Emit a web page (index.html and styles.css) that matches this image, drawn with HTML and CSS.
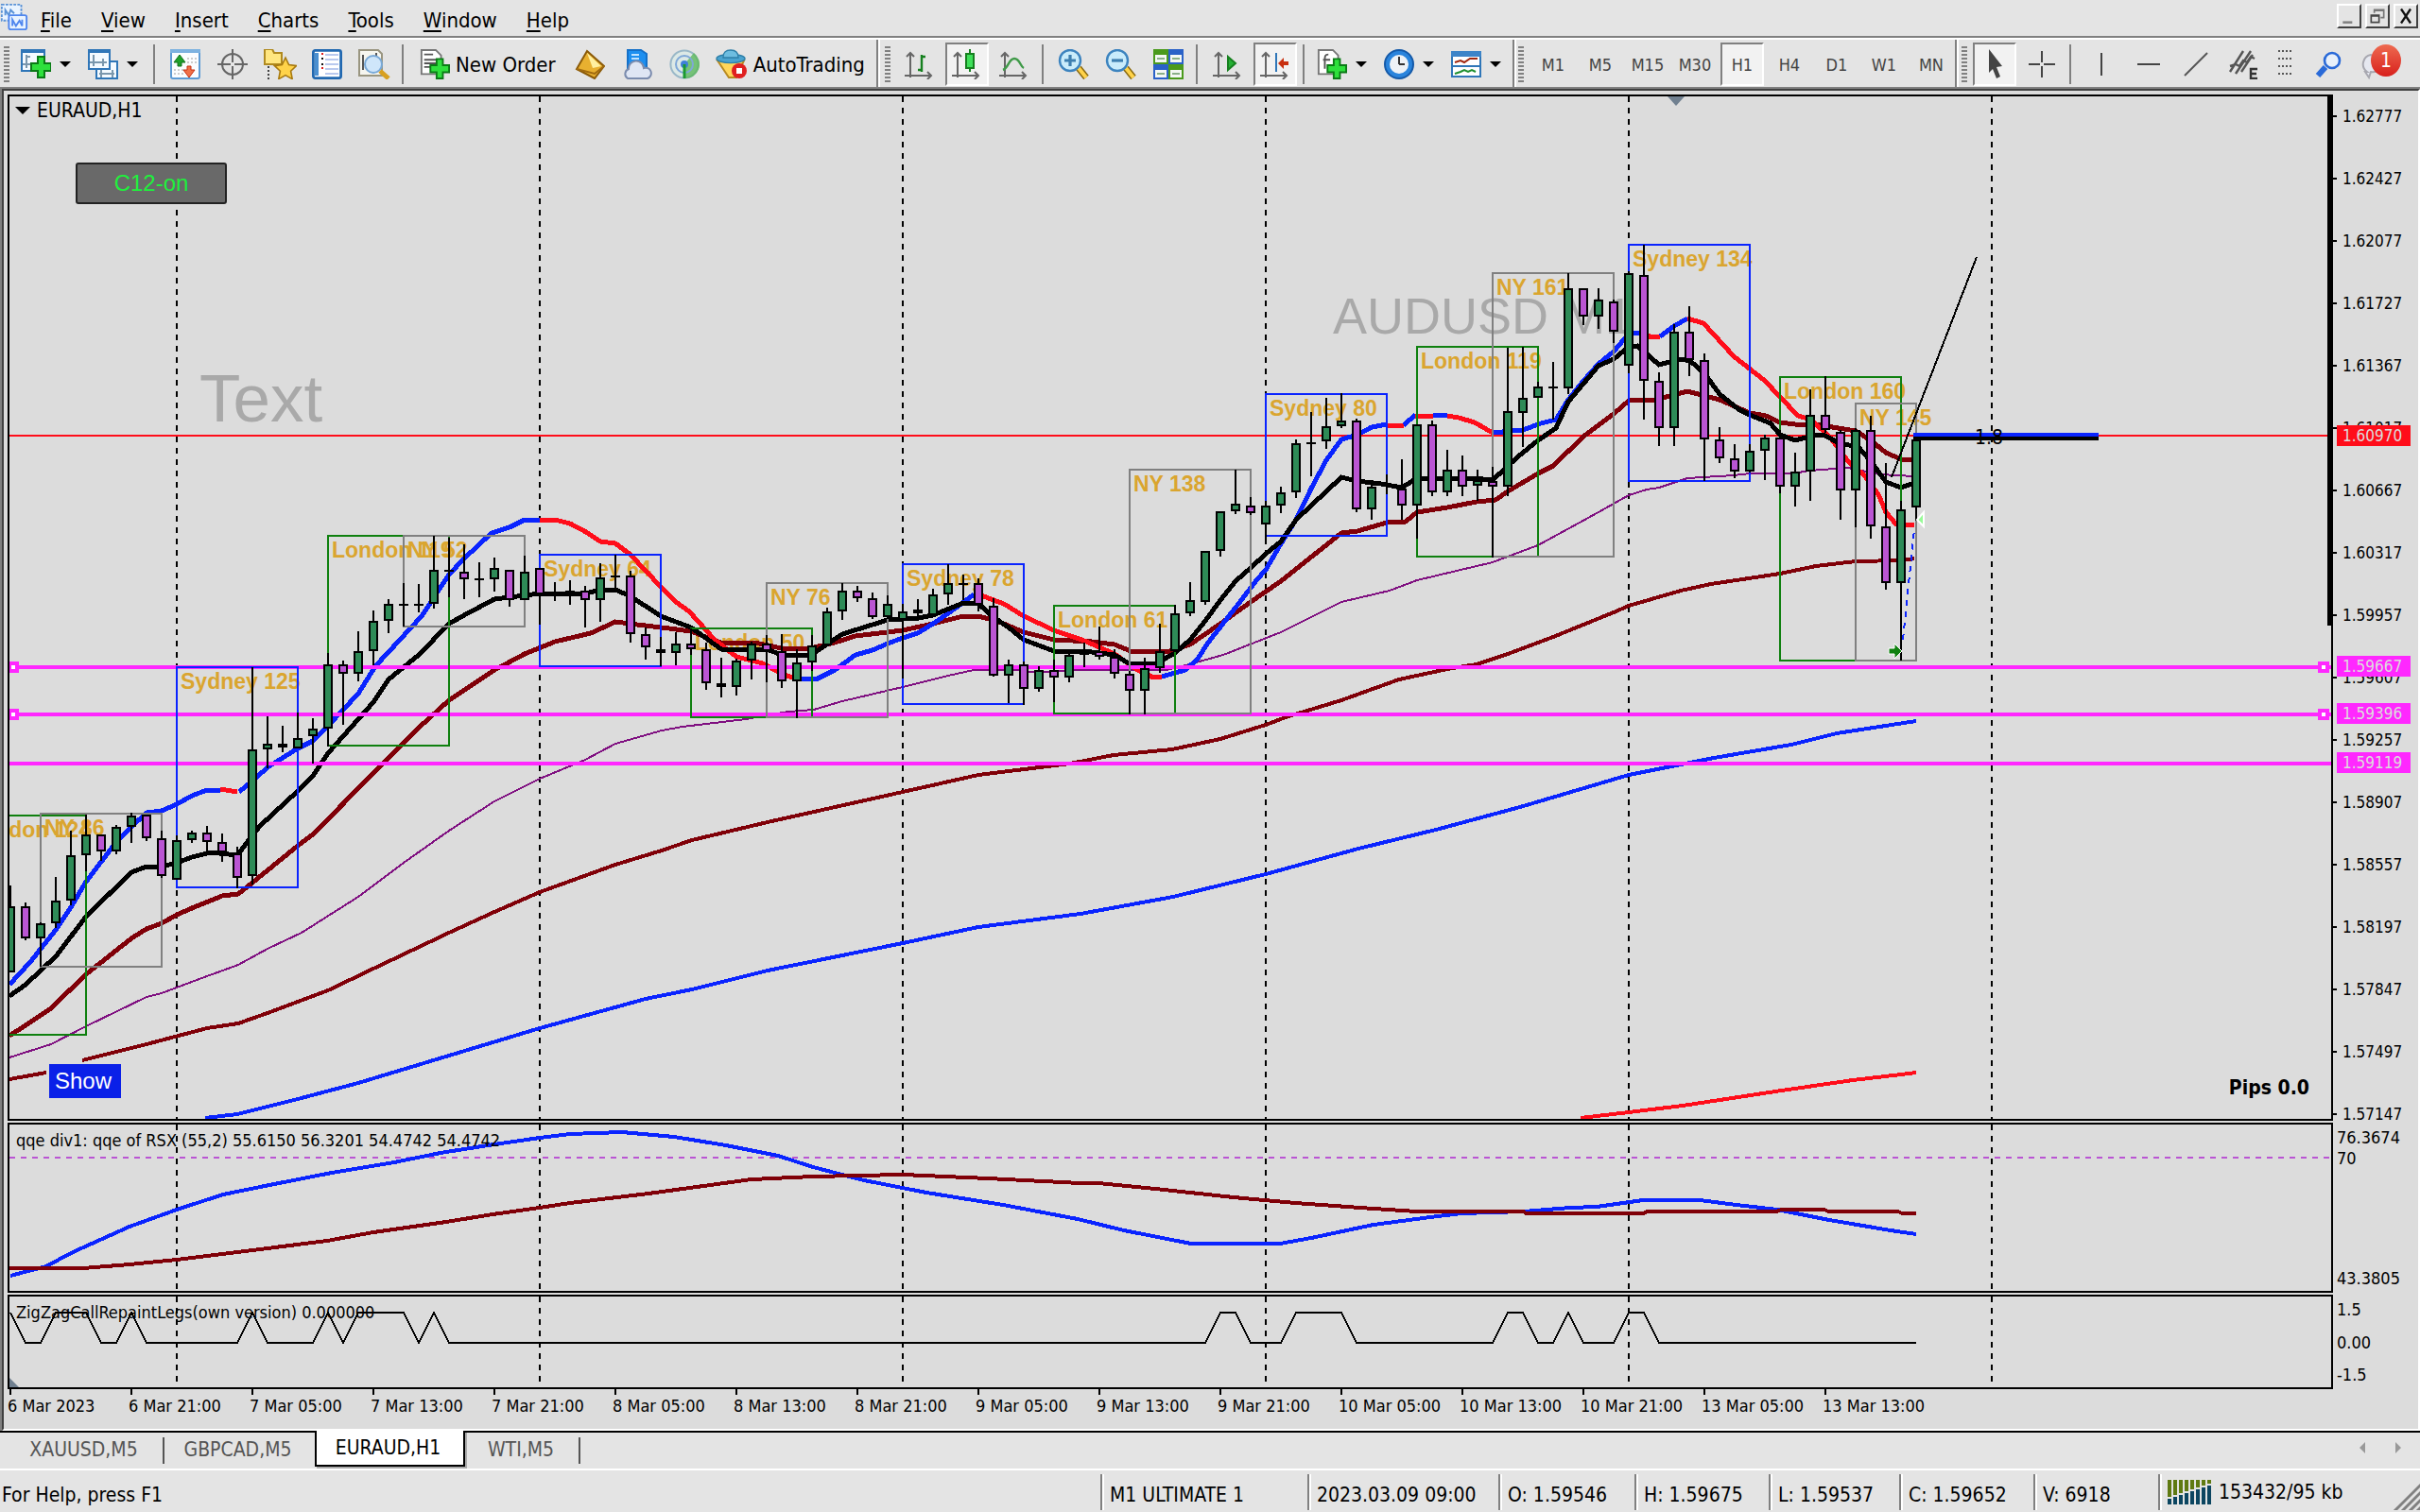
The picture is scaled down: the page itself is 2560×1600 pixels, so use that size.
FILE: index.html
```html
<!DOCTYPE html>
<html lang="en">
<head>
  <meta charset="UTF-8">
  <meta name="viewport" content="width=device-width, initial-scale=1.0">
  <title>EURAUD,H1</title>
  <link rel="stylesheet" href="styles.css">
</head>
<body>
  <!-- menu bar -->
  <header class="menubar">
    <svg class="app-icon" viewBox="0 0 16 16">
      <rect x="1" y="1" width="11" height="9" fill="#eaf4ff" stroke="#5b93d6" stroke-dasharray="1.5 .7"/>
      <path d="M3 7V4l2 3 1-3 2 2" fill="none" stroke="#5b93d6"/>
      <rect x="5" y="7" width="10" height="8" rx="1" fill="#eaf4ff" stroke="#4f86ee"/>
      <path d="M7 13V9.500l2 3.500 2-3 1.500 3V9.500" fill="none" stroke="#4f86ee"/>
    </svg>
    <nav class="menus">
      <button><u>F</u>ile</button>
      <button><u>V</u>iew</button>
      <button><u>I</u>nsert</button>
      <button><u>C</u>harts</button>
      <button><u>T</u>ools</button>
      <button><u>W</u>indow</button>
      <button><u>H</u>elp</button>
    </nav>
    <div class="window-buttons">
      <button aria-label="Minimize"><svg viewBox="0 0 12 12"><path d="M2 10h6" stroke="#808080" stroke-width="1.5"/></svg></button>
      <button aria-label="Restore"><svg viewBox="0 0 12 12"><path d="M4 4V2h6v5H8M4 2.500h6" fill="none" stroke="#777"/><path d="M2 5.500h5V10H2zM2 6h5" fill="none" stroke="#444"/></svg></button>
      <button aria-label="Close"><svg viewBox="0 0 12 12"><path d="M3 1.500l6 9M9 1.500l-6 9" stroke="#111" stroke-width="1.400"/></svg></button>
    </div>
  </header>

  <!-- toolbars -->
  <div class="toolbars">
    <div class="toolbar">
      <span class="grip"></span>
      <button class="tool drop" aria-label="New chart">
        <svg viewBox="0 0 16 16"><rect x=".5" y=".5" width="12" height="11" fill="#f4faff" stroke="#2f76b8"/><path d="M0 1h13" stroke="#2f76b8" stroke-width="2"/><path d="M3 3v7M1 8h9M3 4h2" stroke="#7a97ad" fill="none"/><path d="M9 4h3.500v3.500H16v4h-3.500V15H9v-3.500H5.500v-4H9z" fill="#2ee03c" stroke="#0b7a16"/></svg>
      </button>
      <button class="tool drop" aria-label="Profiles">
        <svg viewBox="0 0 16 16"><rect x="4.500" y="6.500" width="11" height="9" fill="#f4faff" stroke="#2f76b8"/><rect x=".5" y=".5" width="11" height="10" fill="#f4faff" stroke="#2f76b8"/><path d="M0 1h12" stroke="#2f76b8" stroke-width="2"/><path d="M3 3v6M1 7h9M8 5v4M6 13h8M7 11v4M13 11v4" stroke="#7a97ad"/></svg>
      </button>
      <span class="sep"></span>
      <button class="tool" aria-label="Market Watch">
        <svg viewBox="0 0 16 16"><rect x=".5" y=".5" width="15" height="15" rx="1" fill="#fbfdff" stroke="#5d9bd5"/><path d="M0 1h16" stroke="#7db2e0" stroke-width="2"/><path d="M9 5h5M9 7h5M2 11h5M2 13h5" stroke="#ccc" stroke-dasharray="1 1"/><path d="M5 3l3 4H6v2H4V7H2z" fill="#1fa02a" stroke="#10701a" stroke-width=".5"/><path d="M9 9h2v2h2l-3 4-3-4h2z" fill="#f07048" stroke="#c83010" stroke-width=".5"/></svg>
      </button>
      <button class="tool" aria-label="Data Window">
        <svg viewBox="0 0 16 16"><circle cx="8" cy="8" r="5.500" fill="none" stroke="#666"/><path d="M8 0v7M8 9v7M0 8h7M9 8h7" stroke="#666"/></svg>
      </button>
      <button class="tool" aria-label="Navigator">
        <svg viewBox="0 0 18 16"><path d="M1 0h4l1 2h4v6H1z" fill="#ffe680" stroke="#b08a20"/><path d="M3 9v7" stroke="#444" stroke-dasharray="1 1"/><path d="M12 4.500l1.800 3.800 4 .5-3 2.800.8 4.200-3.600-2-3.600 2 .8-4.200-3-2.800 4-.5z" fill="#ffd34a" stroke="#a87a10" stroke-width=".8"/></svg>
      </button>
      <button class="tool" aria-label="Terminal">
        <svg viewBox="0 0 16 16"><rect x=".7" y=".7" width="14.600" height="14.600" rx="1" fill="#fff" stroke="#2168b0" stroke-width="1.400"/><path d="M2.500 2v12" stroke="#4a8fd0" stroke-width="2"/><path d="M7 3h7M7 5.500h7M7 8h7M7 10.500h7M7 13h7" stroke="#b9c9ee"/><path d="M5 2.500h1M5 10h1" stroke="#e02020"/><path d="M5 5h1M5 8h1" stroke="#111"/></svg>
      </button>
      <button class="tool" aria-label="Strategy Tester">
        <svg viewBox="0 0 18 16"><path d="M1 .5h10l2 2V14H1z" fill="#f6f6f0" stroke="#999580"/><path d="M3 3v8M10 2v3" stroke="#555"/><circle cx="8.500" cy="8" r="4.500" fill="#cfe6fa" stroke="#79a9d8"/><path d="M12 11.500l4.500 4" stroke="#d8a020" stroke-width="2.500"/></svg>
      </button>
      <span class="sep"></span>
      <button class="tool labelled new-order">
        <svg viewBox="0 0 16 17"><path d="M.5.5h8l3 3V14H.5z" fill="#fff" stroke="#777"/><path d="M2 3h5M2 6h7M2 8h7M2 10h5" stroke="#555"/><path d="M9 5.500h3.500V9H16v4h-3.500v3.500H9V13H5.500V9H9z" fill="#2ee03c" stroke="#0b7a16"/></svg>
        New Order
      </button>
      <button class="tool" aria-label="MetaEditor">
        <svg viewBox="0 0 16 16"><path d="M6.500 1l9 8-5 6.500-9.500-5z" fill="#e8b030" stroke="#8a5a08"/><path d="M6.500 2l7.500 7-4.500 1z" fill="#fff0a0"/><path d="M1 10.500l9.500 2.500 5-4" fill="none" stroke="#a06a10"/></svg>
      </button>
      <button class="tool" aria-label="VPS">
        <svg viewBox="0 0 16 16"><path d="M3 .5h7l3 2v8H3z" fill="#1d8ff0" stroke="#1570c8"/><path d="M5 3h4M5 5h4M5 7h4" stroke="#bfe2ff"/><path d="M3 15.500a2.800 2.800 0 01.5-5 4 4 0 018-.5 2.800 2.800 0 012 5.500z" fill="#dfe6f4" stroke="#7b8cae"/></svg>
      </button>
      <button class="tool" aria-label="Signals">
        <svg viewBox="0 0 16 16"><circle cx="8" cy="8" r="7.300" fill="#dce9e6" stroke="#9ab8c8"/><path d="M8 8V15.500A7.500 7.500 0 0013 2z" fill="#5cb85c" opacity=".8"/><circle cx="8" cy="8" r="4.500" fill="none" stroke="#7fa8d8"/><circle cx="8" cy="8" r="2" fill="#3f80d8"/><path d="M8 8v7.500" stroke="#1a9a30" stroke-width="1.500"/></svg>
      </button>
      <button class="tool labelled auto-trading">
        <svg viewBox="0 0 17 16"><path d="M1 6h14l-4 9H7z" fill="#ffd75a" stroke="#b88a20"/><ellipse cx="8" cy="5" rx="7.500" ry="2.300" fill="#4aa3cf" stroke="#2d7fa8" stroke-width=".7"/><path d="M4 4.500C4 1 6 .5 8 .5s4 .5 4 4z" fill="#6dbde0" stroke="#2d7fa8" stroke-width=".7"/><circle cx="12.500" cy="11.500" r="4" fill="#e02020"/><path d="M11 10h3v3h-3z" fill="#fff"/></svg>
        AutoTrading
      </button>
    </div>

    <div class="toolbar charts">
      <span class="grip"></span>
      <button class="tool" aria-label="Bar Chart">
        <svg viewBox="0 0 16 16"><path d="M3 2v13M1 4l2-2 2 2M0 14h14M12 12l2 2-2 2" fill="none" stroke="#666"/><path d="M9 3v9M9 4h2M7 11h2" stroke="#16801f" stroke-width="1.200"/></svg>
      </button>
      <button class="tool pressed" aria-label="Candlesticks">
        <svg viewBox="0 0 16 16"><path d="M3 2v13M1 4l2-2 2 2M0 14h14M12 12l2 2-2 2" fill="none" stroke="#666"/><path d="M9.500 0v12" stroke="#16801f"/><rect x="7.500" y="2.500" width="4" height="7.500" fill="#3fe05a" stroke="#16801f"/></svg>
      </button>
      <button class="tool" aria-label="Line Chart">
        <svg viewBox="0 0 16 16"><path d="M3 2v13M1 4l2-2 2 2M0 14h14M12 12l2 2-2 2" fill="none" stroke="#666"/><path d="M2 11c3-1 3-6 6-6s3 4 5 5" fill="none" stroke="#3f9a48" stroke-width="1.200"/></svg>
      </button>
      <span class="sep"></span>
      <button class="tool" aria-label="Zoom In">
        <svg viewBox="0 0 17 16"><path d="M11 10l4 5" stroke="#8a6a10" stroke-width="3.500"/><path d="M11 10l4 5" stroke="#ffd34a" stroke-width="2"/><circle cx="6.500" cy="6" r="5.500" fill="#c9ecfb" stroke="#3d84bf" stroke-width="1.200"/><path d="M6.500 3v6M3.500 6h6" stroke="#3d7fb0" stroke-width="1.600"/></svg>
      </button>
      <button class="tool" aria-label="Zoom Out">
        <svg viewBox="0 0 17 16"><path d="M11 10l4 5" stroke="#8a6a10" stroke-width="3.500"/><path d="M11 10l4 5" stroke="#ffd34a" stroke-width="2"/><circle cx="6.500" cy="6" r="5.500" fill="#c9ecfb" stroke="#3d84bf" stroke-width="1.200"/><path d="M3.500 6h6" stroke="#3d7fb0" stroke-width="1.600"/></svg>
      </button>
      <button class="tool" aria-label="Tile Windows">
        <svg viewBox="0 0 16 16"><path d="M0 0h8v8H0z" fill="#4a9a1c"/><path d="M8 0h8v8H8z" fill="#2a62c8"/><path d="M0 8h8v8H0z" fill="#2a62c8"/><path d="M8 8h8v8H8z" fill="#4a9a1c"/><path d="M1 3h6v4H1zM9 3h6v4H9zM1 11h6v4H1zM9 11h6v4H9z" fill="#f4f8f4"/><path d="M2 5h4M10 5h4M2 13h4M10 13h4" stroke="#8ab088"/></svg>
      </button>
      <span class="sep"></span>
      <button class="tool" aria-label="Auto Scroll">
        <svg viewBox="0 0 16 16"><path d="M3 2v13M1 4l2-2 2 2M0 14h14M12 12l2 2-2 2" fill="none" stroke="#666"/><path d="M8 4l4 3.500L8 11z" fill="#25b034" stroke="#16801f"/></svg>
      </button>
      <button class="tool pressed" aria-label="Chart Shift">
        <svg viewBox="0 0 16 16"><path d="M3 2v13M1 4l2-2 2 2M0 14h14M12 12l2 2-2 2" fill="none" stroke="#666"/><path d="M8.500 2v10" stroke="#2f76b8"/><path d="M9.500 7.500l3-3v2H15v2h-2.500v2z" fill="#c83010"/></svg>
      </button>
      <span class="sep"></span>
      <button class="tool drop" aria-label="Indicators">
        <svg viewBox="0 0 16 17"><path d="M.5.5h8l3 3V14H.5z" fill="#fff" stroke="#777"/><path d="M6 3c-2 0-2 1-2 3v5M3 6h4" fill="none" stroke="#555"/><path d="M9 5.500h3.500V9H16v4h-3.500v3.500H9V13H5.500V9H9z" fill="#2ee03c" stroke="#0b7a16"/></svg>
      </button>
      <button class="tool drop" aria-label="Periods">
        <svg viewBox="0 0 16 16"><circle cx="8" cy="8" r="7.500" fill="#2a84dc" stroke="#1459a8"/><circle cx="8" cy="8" r="5" fill="#eef2f6"/><path d="M8 8V4M8 8h3" stroke="#333" fill="none"/></svg>
      </button>
      <button class="tool drop" aria-label="Templates">
        <svg viewBox="0 0 16 16"><rect x=".5" y="1.500" width="15" height="13" fill="#fff" stroke="#2f76b8"/><path d="M0 2.500h16" stroke="#3d84c8" stroke-width="3"/><path d="M0 9h16" stroke="#2f76b8"/><path d="M2 7l3-1 2 1 3-2h4" fill="none" stroke="#a02810"/><path d="M2 13l3-1 2-1 2 1 2-1 2 1" fill="none" stroke="#209030"/></svg>
      </button>
    </div>

    <div class="toolbar periods">
      <span class="grip"></span>
      <button class="tool period">M1</button>
      <button class="tool period">M5</button>
      <button class="tool period">M15</button>
      <button class="tool period">M30</button>
      <button class="tool period pressed">H1</button>
      <button class="tool period">H4</button>
      <button class="tool period">D1</button>
      <button class="tool period">W1</button>
      <button class="tool period">MN</button>
    </div>

    <div class="toolbar drawing">
      <span class="grip"></span>
      <button class="tool pressed" aria-label="Cursor">
        <svg viewBox="0 0 16 16"><path d="M5 0l7 9-3 .5 2 5-2 1-2-5-2 2z" fill="#444"/></svg>
      </button>
      <button class="tool" aria-label="Crosshair">
        <svg viewBox="0 0 16 16"><path d="M8 1v6M8 9v6M1 8h6M9 8h6" stroke="#444"/></svg>
      </button>
      <span class="sep"></span>
      <button class="tool" aria-label="Vertical Line">
        <svg viewBox="0 0 16 16"><path d="M8 2v12" stroke="#444"/></svg>
      </button>
      <button class="tool" aria-label="Horizontal Line">
        <svg viewBox="0 0 16 16"><path d="M2 8h12" stroke="#444"/></svg>
      </button>
      <button class="tool" aria-label="Trendline">
        <svg viewBox="0 0 16 16"><path d="M2 14L14 2" stroke="#555"/></svg>
      </button>
      <button class="tool" aria-label="Equidistant Channel">
        <svg viewBox="0 0 16 16"><path d="M1 12L8 1M4 13l8-12M7 12l6-9M1 9l3-1 2 1 2-3 2 1 2-3 2 1" fill="none" stroke="#555" stroke-width="1.200"/><path d="M15.500 10.500h-3.500v5h3.500M12 13h3" fill="none" stroke="#333" stroke-width="1.200"/></svg>
      </button>
      <button class="tool narrow" aria-label="More">
        <svg viewBox="0 0 16 16"><path d="M4 1h8M4 5h8M4 9h8M4 13h8" stroke="#555" stroke-dasharray="1 1"/></svg>
      </button>
      <button class="tool" aria-label="Search">
        <svg viewBox="0 0 16 16"><path d="M6.500 9.500l-4 4.500" stroke="#2a6ad8" stroke-width="3"/><circle cx="10" cy="6" r="4" fill="#e8f0fa" stroke="#2a6ad8" stroke-width="1.300"/></svg>
      </button>
      <button class="tool alerts" aria-label="Notifications">
        <svg viewBox="0 0 16 16"><path d="M7 3a5 5 0 00-2 9l-1 0 2 3 1-3a6 5 0 007-4z" fill="#e6e8f0" stroke="#a8a8b0"/></svg>
        <span class="badge">1</span>
      </button>
    </div>
  </div>

  <!-- chart window -->
  <main class="chart-window">
    <section class="pane pane-main">
      <svg id="mainChart" class="plot"></svg>
      <h1 class="symbol"><span class="down"></span>EURAUD,H1</h1>
      <button class="c12">C12-on</button>
      <button class="show">Show</button>
      <p class="pips">Pips 0.0</p>
      <span class="thick-bar"></span>
    </section>
    <div class="axis price-axis">
      <ol>
        <li>1.62777</li>
        <li>1.62427</li>
        <li>1.62077</li>
        <li>1.61727</li>
        <li>1.61367</li>
        <li>1.61017</li>
        <li>1.60667</li>
        <li>1.60317</li>
        <li>1.59957</li>
        <li>1.59607</li>
        <li>1.59257</li>
        <li>1.58907</li>
        <li>1.58557</li>
        <li>1.58197</li>
        <li>1.57847</li>
        <li>1.57497</li>
        <li>1.57147</li>
      </ol>
      <span class="tag bid">1.60970</span>
      <span class="tag level1">1.59667</span>
      <span class="tag level2">1.59396</span>
      <span class="tag level3">1.59119</span>
    </div>

    <section class="pane">
      <svg id="qqeChart" class="plot"></svg>
      <p class="pane-title">qqe div1: qqe of RSX (55,2) 55.6150 56.3201 54.4742 54.4742</p>
    </section>
    <div class="axis qqe-axis">
      <span>76.3674</span>
      <span>70</span>
      <span class="last">43.3805</span>
    </div>

    <section class="pane">
      <svg id="zigzagChart" class="plot"></svg>
      <p class="pane-title">ZigZagCallRepaintLegs(own version) 0.000000</p>
    </section>
    <div class="axis zigzag-axis">
      <span>1.5</span>
      <span>0.00</span>
      <span>-1.5</span>
    </div>

    <ol class="time-axis">
      <li>6 Mar 2023</li>
      <li>6 Mar 21:00</li>
      <li>7 Mar 05:00</li>
      <li>7 Mar 13:00</li>
      <li>7 Mar 21:00</li>
      <li>8 Mar 05:00</li>
      <li>8 Mar 13:00</li>
      <li>8 Mar 21:00</li>
      <li>9 Mar 05:00</li>
      <li>9 Mar 13:00</li>
      <li>9 Mar 21:00</li>
      <li>10 Mar 05:00</li>
      <li>10 Mar 13:00</li>
      <li>10 Mar 21:00</li>
      <li>13 Mar 05:00</li>
      <li>13 Mar 13:00</li>
    </ol>
  </main>

  <!-- chart tabs -->
  <nav class="tabs">
    <button class="tab">XAUUSD,M5</button>
    <button class="tab">GBPCAD,M5</button>
    <button class="tab active">EURAUD,H1</button>
    <button class="tab">WTI,M5</button>
    <div class="tab-scroll">
      <button aria-label="Scroll left"><svg viewBox="0 0 6 12"><path d="M6 0v12L0 6z" fill="#999"/></svg></button>
      <button aria-label="Scroll right"><svg viewBox="0 0 6 12"><path d="M0 0v12l6-6z" fill="#999"/></svg></button>
    </div>
  </nav>

  <!-- status bar -->
  <footer class="statusbar">
    <span class="help">For Help, press F1</span>
    <span class="profile">M1 ULTIMATE 1</span>
    <span class="date">2023.03.09 09:00</span>
    <span class="open">O: 1.59546</span>
    <span class="high">H: 1.59675</span>
    <span class="low">L: 1.59537</span>
    <span class="close">C: 1.59652</span>
    <span class="volume">V: 6918</span>
    <span class="traffic">
      <svg viewBox="0 0 46 26">
        <path d="M0 0h4v18H0zM6 0h4v16H6zM12 0h4v14h-4zM18 0h4v12h-4zM24 0h4v10h-4zM30 0h4v8h-4zM36 0h4v6h-4zM42 0h4v4h-4z" fill="#5f7a12"/>
        <path d="M0 20h4v6H0zM6 18h4v8H6zM12 16h4v10h-4zM18 14h4v12h-4zM24 12h4v14h-4zM30 10h4v16h-4zM36 8h4v18h-4zM42 6h4v20h-4z" fill="#0b4560"/>
      </svg>
      153432/95 kb
    </span>
    <svg class="resize" viewBox="0 0 30 30"><path d="M2 32L32 2M10 32L32 10M18 32L32 18M26 32l6-6" stroke="#808080" stroke-width="3"/></svg>
  </footer>

  <script src="chart.js"></script>
</body>
</html>
```
FILE: styles.css
```css
/* Global Styles */
* {
  box-sizing: border-box;
}

body {
  margin: 0;
  height: 100vh;
  display: flex;
  flex-direction: column;
  overflow: hidden;
  background-color: #e4e4e4;
  color: #000;
  font-family: "DejaVu Sans Condensed", "DejaVu Sans", sans-serif;
  font-size: 21px;
}

button {
  margin: 0;
  padding: 0;
  border: none;
  background: none;
  color: inherit;
  font: inherit;
}

ol, p, h1 {
  margin: 0;
  padding: 0;
  list-style: none;
  font-weight: normal;
}

/* menu bar */
.menubar {
  display: flex;
  align-items: center;
  height: 40px;
  padding: 2px 2px 0 0;
  border-bottom: 2px solid #808080;
  font-size: 22px;
}

.app-icon {
  width: 30px;
  height: 30px;
  margin-top: -4px;
}

.menus {
  display: flex;
  flex: 1;
}

.menus button {
  padding: 2px 18px 0 13px;
}

.menus u {
  text-underline-offset: 3px;
  text-decoration-thickness: 2px;
}

.window-buttons {
  display: flex;
  gap: 4px;
  margin-top: -6px;
}

.window-buttons button {
  width: 26px;
  height: 26px;
  border: 2px solid #fff;
  border-right-color: #404040;
  border-bottom-color: #404040;
  display: flex;
  align-items: center;
  justify-content: center;
}

.window-buttons svg {
  width: 20px;
  height: 20px;
}

/* toolbars */
.toolbars {
  display: flex;
  height: 52px;
  border-top: 2px solid #fff;
}

.toolbar {
  display: flex;
  align-items: center;
  flex: none;
  padding: 2px 6px 0 4px;
  border-right: 2px solid #808080;
  box-shadow: 2px 0 #fff;
}

.toolbar.charts {
  padding-right: 0;
  padding-left: 7px;
}

.toolbar.periods {
  padding-right: 0;
}

.toolbar.drawing {
  flex: 1;
  padding-left: 5px;
  border-right: none;
  box-shadow: none;
}

.grip {
  flex: none;
  width: 6px;
  height: 38px;
  margin-right: 6px;
  background: repeating-linear-gradient(#808080 0 2px, #e4e4e4 2px 4px);
}

.drawing .grip {
  margin-right: 4px;
}

.sep {
  flex: none;
  width: 2px;
  height: 42px;
  margin: 0 7px 0 4px;
  background-color: #808080;
}

.tool {
  display: flex;
  align-items: center;
  justify-content: center;
  flex: none;
  width: 50px;
  height: 46px;
}

.tool svg {
  flex: none;
  height: 32px;
  min-width: 32px;
}

.tool.drop {
  width: 71px;
  justify-content: flex-start;
  padding-left: 6px;
  gap: 9px;
}

.tool.drop::after {
  content: "";
  border: 6px solid transparent;
  border-top: 6px solid #000;
  border-bottom: none;
}

.tool.labelled {
  width: auto;
  gap: 6px;
  justify-content: flex-start;
  white-space: nowrap;
  font-size: 22px;
}

.new-order {
  padding: 0 11px 0 10px;
}

.auto-trading {
  padding: 0 6px 0 8px;
}

.tool.pressed {
  width: 46px;
  margin: 0 2px;
  border: 2px solid #fff;
  border-top-color: #808080;
  border-left-color: #808080;
  background: #f2f2f2;
}

.period {
  color: #444;
  font-size: 18px;
}

.tool.narrow {
  width: 40px;
}

.tool.alerts {
  position: relative;
  width: 60px;
  justify-content: flex-start;
  padding-left: 6px;
}

.badge {
  position: absolute;
  right: 8px;
  top: 2px;
  width: 32px;
  height: 34px;
  border-radius: 50%;
  background: linear-gradient(#ee6a50, #d8201c);
  color: #fff;
  line-height: 34px;
  text-align: center;
}

/* chart window */
.chart-window {
  flex: 1;
  display: grid;
  grid-template-columns: 1fr 88px;
  grid-template-rows: minmax(0, 1fr) 180px 100px 40px;
  row-gap: 2px;
  min-height: 0;
  padding: 4px 2px 0 4px;
  background-color: #dcdcdc;
  border: 2px solid #404040;
  border-right-color: #fff;
  border-bottom-color: #fff;
  outline: 2px solid #808080;
  margin: 2px 0 0 2px;
  font-size: 18px;
}

.pane {
  position: relative;
  border: 2px solid #000;
  overflow: hidden;
}

.plot {
  display: block;
  position: absolute;
  width: 100%;
  height: 100%;
}

.symbol {
  position: relative;
  display: flex;
  align-items: center;
  gap: 7px;
  padding: 4px 6px;
  font-size: 21px;
  line-height: 22px;
}

.down {
  border: 8px solid transparent;
  border-top: 8px solid #000;
  border-bottom: none;
}

.c12,
.show {
  position: absolute;
  font-family: "Liberation Sans", Arial, sans-serif;
  font-size: 24px;
}

.c12 {
  left: 70px;
  top: 70px;
  width: 160px;
  height: 44px;
  background-color: #696969;
  border: 2px solid #222;
  border-radius: 3px;
  color: #1ef03c;
}

.show {
  left: 42px;
  bottom: 22px;
  width: 76px;
  height: 36px;
  padding-right: 4px;
  background-color: #0a20e8;
  color: #fff;
}

.pips {
  position: absolute;
  right: 23px;
  bottom: 21px;
  font-size: 21px;
  font-weight: bold;
}

.thick-bar {
  position: absolute;
  right: 0;
  top: 0;
  width: 4px;
  height: 560px;
  background-color: #000;
}

.pane-title {
  position: relative;
  padding: 6px 7px;
}

/* price and indicator scales */
.axis {
  position: relative;
}

.price-axis ol {
  margin-top: -10px;
}

.price-axis li {
  display: flex;
  align-items: center;
  gap: 6px;
  height: 66px;
  font-size: 17px;
}

.price-axis li::before {
  content: "";
  width: 4px;
  height: 2px;
  background-color: #000;
}

.tag {
  position: absolute;
  left: 4px;
  width: 78px;
  height: 22px;
  padding-left: 6px;
  background-color: #ff28ff;
  color: #dcdcdc;
  font-size: 17px;
  line-height: 22px;
}

.bid {
  top: 350px;
  background-color: #ff0d1a;
}

.level1 {
  top: 594px;
}

.level2 {
  top: 644px;
}

.level3 {
  top: 696px;
}

.qqe-axis,
.zigzag-axis {
  display: flex;
  flex-direction: column;
  padding: 5px 0 4px 4px;
  line-height: 22px;
}

.qqe-axis .last {
  margin-top: auto;
}

.zigzag-axis {
  justify-content: space-between;
}

.time-axis {
  grid-column: 1 / -1;
  display: flex;
  margin-top: -2px;
  overflow: hidden;
}

.time-axis li {
  flex: none;
  width: 128px;
  line-height: 24px;
  white-space: nowrap;
}

.time-axis li::before {
  content: "";
  display: block;
  width: 2px;
  height: 6px;
  margin-left: 2px;
  background-color: #000;
}

/* text and shapes inside the plots */
.plot text {
  font-family: "Liberation Sans", Arial, sans-serif;
}

.plot .session-label {
  fill: #daa52f;
  font-size: 23px;
  font-weight: bold;
}

.plot .watermark {
  fill: #a9a9a9;
}

.plot .ratio {
  font-family: "DejaVu Sans Condensed", sans-serif;
  font-size: 21px;
}

.plot polyline,
.plot rect,
.plot line {
  shape-rendering: crispEdges;
}

/* tabs */
.tabs {
  display: flex;
  height: 42px;
  padding-left: 3px;
  border-top: 2px solid #000;
  border-bottom: 2px solid #fff;
  color: #555;
}

.tab {
  position: relative;
  width: 159px;
  height: 36px;
  padding-right: 4px;
}

.tab:nth-child(1) {
  width: 171px;
  padding-right: 0;
}

.tab:nth-child(4) {
  width: 122px;
}

.tab:nth-child(1)::after,
.tab:nth-child(4)::after {
  content: "";
  position: absolute;
  right: 0;
  top: 5px;
  width: 2px;
  height: 28px;
  background-color: #555;
}

.tab.active {
  margin-top: -2px;
  height: 38px;
  background-color: #fff;
  border: 2px solid #000;
  border-top: none;
  box-shadow: 2px 2px #aaa;
  color: #000;
}

.tab-scroll {
  display: flex;
  align-items: center;
  gap: 32px;
  margin-left: auto;
  padding: 0 20px 6px 0;
}

.tab-scroll svg {
  display: block;
  width: 6px;
  height: 12px;
}

/* status bar */
.statusbar {
  display: flex;
  height: 44px;
  padding: 4px 0 2px;
  line-height: 44px;
}

.statusbar span {
  flex: none;
  padding-left: 8px;
  border-left: 2px solid #808080;
  box-shadow: inset 2px 0 #fff;
  white-space: nowrap;
}

.statusbar .help {
  flex: 1;
  padding-left: 2px;
  border: none;
  box-shadow: none;
}

.profile {
  width: 219px;
}

.date {
  width: 202px;
}

.open {
  width: 144px;
}

.high {
  width: 142px;
}

.low {
  width: 138px;
}

.close {
  width: 142px;
}

.volume {
  width: 132px;
}

.traffic {
  display: flex;
  align-items: center;
  gap: 8px;
  width: 247px;
}

.traffic svg {
  width: 46px;
  height: 26px;
}

.resize {
  width: 30px;
  height: 30px;
  margin-top: 8px;
}
```
FILE: chart.js
```js
const SVG = 'http://www.w3.org/2000/svg';

// chart colors
const BLUE = '#0a24ff';
const RED = '#ff0d1a';
const BLACK = '#000000';
const MAROON = '#800008';
const PURPLE = '#7f0f80';
const MAGENTA = '#ff28ff';
const GREEN = '#0f800f';
const GRAY = '#808080';

// bars are 16px apart, the first one sits at x = 11
const BAR_STEP = 16;
const FIRST_BAR = 11;

// [high, body top, body bottom, low, u = up / d = down / - = doji]
const bars = [
  [937, 959, 1029, 1029, 'u'], [955, 959, 993, 995, 'd'], [976, 977, 993, 1023, 'u'], [928, 953, 977, 982, 'u'],
  [879, 905, 953, 958, 'u'], [862, 883, 905, 922, 'u'], [883, 883, 901, 911, 'd'], [873, 875, 901, 904, 'u'],
  [860, 863, 875, 892, 'u'], [862, 862, 887, 890, 'd'], [879, 887, 927, 929, 'd'], [884, 889, 931, 931, 'u'],
  [879, 881, 889, 892, 'u'], [874, 881, 891, 901, 'd'], [882, 891, 902, 912, 'd'], [896, 903, 929, 940, 'd'],
  [706, 793, 927, 936, 'u'], [758, 787, 793, 813, 'u'], [768, 787, 791, 796, 'd'], [754, 781, 792, 792, 'u'],
  [760, 771, 779, 808, 'u'], [691, 703, 771, 790, 'u'], [699, 703, 713, 767, 'd'], [668, 689, 713, 721, 'u'],
  [646, 657, 689, 704, 'u'], [634, 639, 657, 670, 'u'], [617, 640, 640, 663, '-'], [618, 640, 640, 648, '-'],
  [567, 603, 639, 644, 'u'], [569, 604, 604, 632, '-'], [576, 605, 613, 634, 'd'], [595, 613, 613, 632, '-'],
  [590, 601, 613, 626, 'u'], [603, 603, 635, 642, 'd'], [588, 605, 635, 635, 'u'], [601, 601, 629, 661, 'd'],
  [616, 628, 628, 636, '-'], [614, 626, 626, 640, '-'], [620, 625, 635, 664, 'd'], [596, 611, 635, 658, 'u'],
  [587, 610, 610, 625, '-'], [604, 609, 671, 680, 'd'], [664, 671, 685, 698, 'd'], [674, 687, 691, 705, 'd'],
  [669, 681, 691, 704, 'u'], [665, 681, 687, 693, 'd'], [680, 687, 723, 730, 'd'], [696, 723, 727, 738, 'd'],
  [697, 699, 727, 736, 'u'], [679, 681, 699, 719, 'u'], [672, 681, 689, 722, 'd'], [671, 689, 721, 728, 'd'],
  [687, 701, 721, 760, 'u'], [672, 683, 701, 710, 'u'], [643, 647, 683, 684, 'u'], [617, 625, 647, 656, 'u'],
  [620, 625, 633, 637, 'd'], [627, 633, 653, 655, 'd'], [630, 639, 653, 655, 'u'], [639, 647, 656, 718, 'u'],
  [634, 645, 649, 657, 'd'], [623, 629, 651, 653, 'u'], [597, 617, 629, 640, 'u'], [608, 618, 618, 635, '-'],
  [612, 617, 640, 647, 'd'], [633, 641, 715, 716, 'd'], [698, 703, 715, 744, 'u'], [700, 703, 729, 746, 'd'],
  [705, 709, 729, 732, 'u'], [698, 709, 717, 743, 'd'], [692, 693, 717, 722, 'u'], [680, 689, 693, 706, 'u'],
  [663, 689, 695, 698, 'd'], [687, 695, 713, 718, 'd'], [710, 713, 731, 756, 'd'], [696, 707, 731, 756, 'u'],
  [660, 689, 707, 712, 'u'], [640, 649, 689, 690, 'u'], [616, 635, 649, 652, 'u'], [583, 583, 637, 640, 'u'],
  [541, 541, 583, 589, 'u'], [497, 533, 541, 544, 'u'], [526, 535, 543, 545, 'd'], [530, 535, 555, 573, 'u'],
  [515, 521, 535, 543, 'u'], [465, 469, 521, 527, 'u'], [436, 469, 469, 504, '-'], [421, 451, 467, 475, 'u'],
  [416, 445, 451, 453, 'u'], [443, 445, 539, 542, 'd'], [513, 515, 539, 550, 'u'], [502, 514, 514, 523, '-'],
  [486, 517, 535, 550, 'd'], [449, 449, 535, 570, 'u'], [445, 449, 521, 525, 'd'], [476, 497, 521, 525, 'u'],
  [482, 497, 515, 525, 'd'], [497, 508, 514, 530, 'u'], [494, 509, 515, 590, 'd'], [368, 435, 515, 525, 'u'],
  [367, 421, 437, 473, 'u'], [404, 409, 421, 421, 'u'], [383, 410, 410, 444, '-'], [289, 305, 411, 417, 'u'],
  [305, 305, 335, 344, 'd'], [305, 317, 335, 348, 'u'], [317, 319, 351, 363, 'd'], [287, 289, 387, 395, 'u'],
  [259, 291, 403, 444, 'd'], [394, 403, 453, 472, 'd'], [343, 351, 453, 472, 'u'], [324, 351, 381, 398, 'd'],
  [374, 381, 465, 509, 'd'], [452, 465, 485, 490, 'd'], [470, 485, 499, 506, 'd'], [470, 477, 499, 500, 'u'],
  [460, 463, 477, 508, 'u'], [455, 463, 515, 522, 'd'], [479, 499, 515, 536, 'u'], [412, 439, 499, 530, 'u'],
  [398, 439, 455, 458, 'd'], [455, 457, 519, 550, 'd'], [453, 455, 519, 558, 'u'], [440, 455, 557, 570, 'd'],
  [490, 557, 617, 624, 'd'], [530, 539, 617, 699, 'u'], [462, 465, 537, 551, 'u']
];

// trading sessions: [label, left, top, right, bottom, color]
const sessions = [
  ['London 124', -37, 863, 91, 1095, GREEN],
  ['NY 86', 43, 861, 171, 1023, GRAY],
  ['Sydney 125', 187, 706, 315, 939, BLUE],
  ['London 119', 347, 567, 475, 789, GREEN],
  ['NY 52', 427, 567, 555, 663, GRAY],
  ['Sydney 64', 571, 587, 699, 705, BLUE],
  ['London 50', 731, 665, 859, 759, GREEN],
  ['NY 76', 811, 617, 939, 759, GRAY],
  ['Sydney 78', 955, 597, 1083, 745, BLUE],
  ['London 61', 1115, 641, 1243, 755, GREEN],
  ['NY 138', 1195, 497, 1323, 755, GRAY],
  ['Sydney 80', 1339, 417, 1467, 567, BLUE],
  ['London 119', 1499, 367, 1627, 589, GREEN],
  ['NY 161', 1579, 289, 1707, 589, GRAY],
  ['Sydney 134', 1723, 259, 1851, 509, BLUE],
  ['London 160', 1883, 399, 2011, 699, GREEN],
  ['NY 145', 1963, 427, 2027, 699, GRAY]
];

// moving averages: [color, width, points]
const averages = [
  [RED, 4, '1672,1183 1723,1177 1780,1170 1878,1155 1960,1143 2011,1137 2027,1135'],
  [BLUE, 4, '217,1183 251,1179 315,1163 379,1146 475,1117 571,1088 683,1057 732,1047 812,1027 955,998 1035,981 1143,967 1241,949 1339,925 1437,898 1519,878 1608,854 1723,820 1813,802 1895,788 1943,776 2027,763'],
  [MAROON, 4, '10,1142 49,1135'],
  [MAROON, 4, '87,1122 155,1105 219,1088 252,1083 283,1072 347,1048 395,1025 475,987 523,965 571,944 651,915 700,900 732,889 812,870 955,838 1035,820 1132,808 1178,799 1240,793 1291,782 1339,767 1360,759 1419,741 1480,719 1531,708 1562,703 1595,692 1643,674 1675,661 1707,648 1723,641 1778,625 1810,618 1883,607 1921,599 1963,594 2011,593 2025,591'],
  [PURPLE, 2, '10,1119 54,1105 91,1086 155,1055 171,1051 187,1045 219,1033 252,1021 283,1004 319,987 379,949 427,913 475,879 523,848 571,824 619,804 651,787 700,773 722,769 789,761 834,753 861,751 891,742 955,727 1003,715 1030,709 1075,709 1089,711 1115,711 1133,709 1234,709 1258,703 1294,693 1355,669 1419,637 1470,625 1499,614 1579,595 1627,577 1691,542 1723,524 1742,518 1755,516 1785,506 1834,503 1851,501 1897,501 1914,498 1955,495 1989,502 2025,504'],
  [MAROON, 5, '10,1096 27,1085 54,1067 91,1031 139,993 155,983 171,977 187,968 203,961 235,948 252,946 267,934 315,895 331,883 395,818 443,770 475,741 523,709 555,692 587,679 625,670 651,658 674,661 700,664 731,668 754,677 763,680 803,681 827,686 857,686 883,680 905,673 955,667 987,660 1019,652 1035,652 1057,658 1083,669 1115,677 1155,679 1179,682 1196,689 1234,690 1259,682 1291,660 1323,637 1355,615 1419,564 1436,562 1467,553 1487,552 1499,542 1531,537 1562,531 1582,529 1595,520 1627,501 1643,493 1675,462 1707,438 1723,424 1751,423 1785,414 1819,423 1851,437 1868,440 1883,447 1899,449 1926,450 1963,456 1979,466 1995,479 2011,486 2025,486'],
  [BLUE, 5, '10,1042 32,1018 59,984 75,960 91,933 123,891 139,875 155,860 171,858 187,851 203,842 219,836 233,836'],
  [RED, 5, '233,835 251,838'],
  [BLUE, 5, '253,838 272,822 283,812 315,792 331,784 347,768 379,734 397,705 411,690 446,652 475,608 491,591 520,564 539,558 555,550 571,550'],
  [RED, 5, '571,550 587,550 603,554 620,563 635,573 651,575 667,587 699,621 715,637 729,647 747,667 756,677 779,695 807,702 827,713 841,718'],
  [BLUE, 5, '841,718 865,718 883,709 905,693 923,688 939,681 955,675 971,670 990,658 1013,642 1030,629'],
  [RED, 5, '1035,629 1062,639 1083,652 1115,667 1147,678 1179,692 1202,708 1218,716 1229,716'],
  [BLUE, 5, '1229,716 1254,709 1267,697 1278,680 1307,643 1330,613 1339,603 1354,577 1371,550 1387,517 1403,487 1419,465 1436,460 1451,452 1467,449'],
  [RED, 5, '1467,450 1485,450'],
  [BLUE, 5, '1485,450 1497,439'],
  [RED, 5, '1497,440 1516,440'],
  [BLUE, 5, '1516,440 1531,439'],
  [RED, 5, '1531,440 1543,442 1560,447 1579,458'],
  [BLUE, 5, '1579,458 1611,455 1630,448 1646,444 1659,423 1675,403 1691,385 1707,372 1723,353 1739,352'],
  [RED, 5, '1739,353 1745,356 1756,356'],
  [BLUE, 5, '1756,356 1771,345 1785,337'],
  [RED, 5, '1785,337 1802,342 1834,377 1867,403 1883,420 1902,440 1916,444 1936,463 1955,488 1972,503 1987,523 1995,542 2006,555 2025,556'],
  [BLACK, 5, '10,1054 27,1042 59,1012 91,970 139,923 155,917 171,917 187,913 203,907 223,902 251,905 267,884 275,874 315,837 331,821 347,797 379,761 395,743 411,719 443,693 475,660 491,651 523,634 555,630 571,628 620,628 635,624 651,624 667,631 699,652 731,664 763,687 779,688 795,687 811,687 827,693 857,694 870,685 891,671 939,656 971,654 987,651 1019,638 1035,639 1051,653 1067,664 1083,677 1115,689 1155,690 1179,693 1194,702 1223,702 1243,691 1259,677 1275,657 1291,635 1307,615 1323,601 1339,586 1355,573 1371,550 1419,505 1435,509 1461,512 1483,516 1499,506 1558,506 1579,508 1606,483 1627,466 1646,453 1659,425 1691,387 1707,380 1723,367 1732,366 1739,372 1755,386 1778,380 1788,382 1803,395 1819,417 1839,433 1851,439 1873,448 1883,460 1899,466 1921,460 1931,461 1947,470 1965,472 1979,488 1995,510 2011,516 2025,511']
];

const qqeLines = [
  [BLUE, 4, '11,1350 49,1340 77,1325 137,1298 187,1280 236,1264 285,1254 351,1241 417,1230 466,1220 516,1212 571,1204 603,1200 658,1198 713,1203 768,1212 823,1223 860,1235 914,1249 980,1262 1061,1275 1140,1290 1189,1302 1260,1316 1354,1316 1387,1310 1420,1303 1453,1296 1513,1288 1546,1284 1612,1282 1661,1278 1689,1277 1738,1270 1798,1270 1837,1275 1880,1280 1935,1291 2000,1302 2027,1306'],
  [MAROON, 4, '10,1342 88,1342 137,1338 187,1333 267,1323 346,1313 395,1304 472,1293 521,1285 571,1278 603,1273 686,1263 795,1248 860,1245 955,1243 1045,1247 1143,1252 1162,1252 1222,1258 1305,1267 1370,1273 1453,1279 1499,1282 1612,1282 1614,1284 1738,1284 1743,1282 1880,1282 1884,1280 1930,1280 1934,1282 2008,1282 2012,1284 2027,1284']
];

// bar positions where the zigzag indicator leaves or reaches 0 / 1
const zigzag = [
  [11, 1], [27, 0], [43, 0], [59, 1], [91, 1], [107, 0], [123, 0], [139, 1], [155, 0], [251, 0], [267, 1], [283, 0],
  [331, 0], [347, 1], [363, 0], [379, 1], [427, 1], [443, 0], [459, 1], [475, 0], [1275, 0], [1291, 1], [1307, 1],
  [1323, 0], [1355, 0], [1371, 1], [1419, 1], [1435, 0], [1579, 0], [1595, 1], [1611, 1], [1627, 0], [1643, 0],
  [1659, 1], [1675, 0], [1707, 0], [1723, 1], [1739, 1], [1755, 0], [2027, 0]
];

function add(parent, name, attrs, text) {
  const el = document.createElementNS(SVG, name);
  for (const key in attrs) {
    el.setAttribute(key, attrs[key]);
  }
  if (text) {
    el.textContent = text;
  }
  parent.appendChild(el);
  return el;
}

// every pane shares the window coordinates, shifted by the pane's own top
function layer(id, top) {
  return add(document.getElementById(id), 'g', { transform: 'translate(-10 ' + -top + ')' });
}

function line(g, x1, y1, x2, y2, color, width, dash) {
  add(g, 'line', { x1, y1, x2, y2, stroke: color, 'stroke-width': width, 'stroke-dasharray': dash || 'none' });
}

function drawLines(g, lines) {
  lines.forEach(([color, width, points]) => {
    add(g, 'polyline', { points, fill: 'none', stroke: color, 'stroke-width': width });
  });
}

// day separators
function drawDays(g, top, bottom) {
  for (let x = 187; x < 2200; x += 384) {
    line(g, x, top, x, bottom, BLACK, 2, '6 6');
  }
}

function drawBars(g) {
  bars.forEach(([high, top, bottom, low, kind], i) => {
    const x = FIRST_BAR + i * BAR_STEP;
    line(g, x, high, x, low, BLACK, 2);
    if (kind === '-') {
      line(g, x - 5, top, x + 5, top, BLACK, 2);
    } else {
      add(g, 'rect', {
        x: x - 4, y: top + 1, width: 8, height: bottom - top - 2,
        fill: kind === 'u' ? '#2e8b57' : '#ba55d3', stroke: BLACK, 'stroke-width': 2
      });
    }
  });
}

function drawMain() {
  const g = layer('mainChart', 102);
  drawDays(g, 102, 1184);
  add(g, 'text', { x: 211, y: 446, 'font-size': 71, class: 'watermark' }, 'Text');
  add(g, 'text', { x: 1410, y: 353, 'font-size': 54, class: 'watermark' }, 'AUDUSD M1');

  sessions.forEach(([label, left, top]) => {
    add(g, 'text', { x: left + 4, y: top + 23, class: 'session-label' }, label);
  });
  line(g, 10, 461, 3000, 461, RED, 2);
  drawLines(g, averages);
  [706, 756, 808].forEach(y => line(g, 10, y, 3000, y, MAGENTA, 4));
  sessions.forEach(([, x, y, right, bottom, color]) => {
    add(g, 'rect', { x, y, width: right - x, height: bottom - y, fill: 'none', stroke: color, 'stroke-width': 2 });
  });
  drawBars(g);

  // level anchors
  [706, 756].forEach(y => {
    [14, 2458].forEach(x => {
      add(g, 'rect', { x: x - 4, y: y - 4, width: 8, height: 8, fill: '#fff', stroke: MAGENTA, 'stroke-width': 4 });
    });
  });

  // open trade and projection
  line(g, 2024, 464, 2220, 464, BLACK, 4);
  line(g, 2024, 460, 2220, 460, BLUE, 4);
  line(g, 2001, 505, 2091, 272, BLACK, 2);
  line(g, 2013, 677, 2025, 560, BLUE, 2, '6 6');
  add(g, 'text', { x: 2089, y: 470, class: 'ratio' }, '1.8');
  add(g, 'path', { d: 'M1998 686h6v-5l8 8-8 8v-5h-6z', fill: GREEN, stroke: '#fff', 'stroke-width': 1 });
  add(g, 'path', { d: 'M2035 542v15l-7-7z', fill: '#98fb98', stroke: '#fff', 'stroke-width': 2 });

  // chart shift mark
  add(g, 'path', { d: 'M1764 102h18l-9 10z', fill: '#708090' });
}

function drawQqe() {
  const g = layer('qqeChart', 1190);
  drawDays(g, 1190, 1366);
  line(g, 10, 1225, 3000, 1225, '#ba55d3', 2, '6 6');
  drawLines(g, qqeLines);
}

function drawZigzag() {
  const g = layer('zigzagChart', 1372);
  drawDays(g, 1372, 1464);
  const points = zigzag.map(([x, v]) => x + ',' + (v ? 1389 : 1421)).join(' ');
  drawLines(g, [[BLACK, 2, points]]);
  add(g, 'path', { d: 'M10 1458l10 10H10z', fill: '#708090' });
}

drawMain();
drawQqe();
drawZigzag();
```
